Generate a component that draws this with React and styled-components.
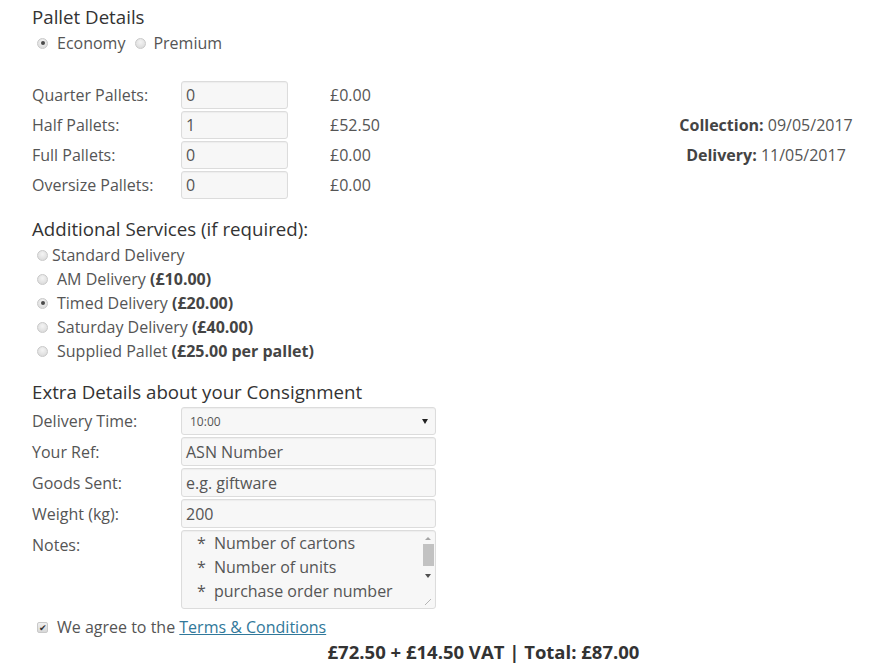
import React from "react";
import styled, { createGlobalStyle } from "styled-components";

const GlobalStyle = createGlobalStyle`
  body {
    margin: 0;
    background: #ffffff;
    font-family: "Open Sans", "Liberation Sans", sans-serif;
    color: #555555;
  }
`;

const Page = styled.div`
  width: 877px;
  padding: 5px 24px 0 32px;
  box-sizing: border-box;
`;

const Heading = styled.h3`
  margin: ${(p) => p.$top || 0}px 0 0 0;
  font-size: 18.7px;
  line-height: 24px;
  font-weight: 400;
  color: #333333;
`;

const RadioRow = styled.div`
  display: flex;
  align-items: center;
  height: 20px;
  margin-top: 4px;
  padding-left: 5px;
  gap: 10px;
`;

const Option = styled.label`
  display: flex;
  align-items: center;
  gap: ${(p) => p.$gap || 9}px;
  height: ${(p) => p.$h || 20}px;
  padding-left: ${(p) => (p.$flush ? 0 : 5)}px;
  font-size: 16px;
  color: #555555;

  b {
    color: #444444;
    font-weight: 700;
  }
`;

const RadioDot = styled.span`
  width: 11px;
  height: 11px;
  border-radius: 50%;
  box-sizing: border-box;
  border: 1px solid #c9c9c9;
  background: radial-gradient(circle at 50% 35%, #f4f4f4, #d6d6d6);
  display: flex;
  align-items: center;
  justify-content: center;

  &::after {
    content: "";
    width: 4px;
    height: 4px;
    border-radius: 50%;
    background: ${(p) => (p.$on ? "#4a4a4a" : "transparent")};
  }
`;

const PalletGrid = styled.div`
  display: grid;
  grid-template-columns: 149px 107px 42px 1fr 174px;
  grid-auto-rows: 28px;
  row-gap: 2px;
  margin-top: 28px;
  align-items: center;
`;

const Label = styled.span`
  font-size: 16px;
  color: #555555;
  align-self: ${(p) => (p.$top ? "start" : "center")};
  padding-top: ${(p) => (p.$top ? 4 : 0)}px;
`;

const Field = styled.div`
  height: ${(p) => p.$h || 28}px;
  box-sizing: border-box;
  border: 1px solid #dcdcdc;
  border-radius: 3px;
  background: #f7f7f7;
  box-shadow: inset 0 1px 1px rgba(0, 0, 0, 0.04);
  padding: 0 4px;
  display: flex;
  align-items: center;
  font-size: ${(p) => p.$fs || 16}px;
  color: #555555;
`;

const Price = styled.span`
  grid-column: 4;
  font-size: 16px;
  color: #555555;
`;

const Info = styled.span`
  grid-column: 5;
  text-align: center;
  white-space: nowrap;
  font-size: 16px;
  color: #555555;

  b {
    color: #444444;
  }
`;

const ServiceList = styled.div`
  display: flex;
  flex-direction: column;
  margin-top: 2px;
`;

const DetailGrid = styled.div`
  display: grid;
  grid-template-columns: 149px 255px;
  row-gap: 2px;
  margin-top: 3px;
  align-items: center;
`;

const Caret = styled.span`
  margin-left: auto;
  margin-right: 3px;
  width: 0;
  height: 0;
  border-left: 3px solid transparent;
  border-right: 3px solid transparent;
  border-top: 5px solid #222222;
`;

const NotesBox = styled(Field)`
  align-items: stretch;
  padding: 0 0 0 15px;
`;

const NotesText = styled.div`
  flex: 1;
  font-size: 16px;
  line-height: 24px;
  color: #555555;
`;

const NoteLine = styled.div`
  display: flex;
  gap: 10px;

  span:first-child {
    width: 7px;
  }
`;

const ScrollTrack = styled.div`
  width: 14px;
  display: flex;
  flex-direction: column;
  align-items: center;
  padding-top: 4px;
`;

const Arrow = styled.span`
  width: 0;
  height: 0;
  border-left: 3px solid transparent;
  border-right: 3px solid transparent;
  ${(p) =>
    p.$up
      ? "border-bottom: 3px solid #a5a5a5;"
      : "border-top: 4px solid #505050;"}
  margin: ${(p) => (p.$up ? "2px 0 4px" : "8px 0 0")};
`;

const Thumb = styled.span`
  width: 11px;
  height: 22px;
  background: #c2c2c2;
`;

const Grip = styled.span`
  margin-top: auto;
  margin-bottom: 3px;
  width: 6px;
  height: 6px;
  background: linear-gradient(135deg, transparent 45%, #b5b5b5 45%, #b5b5b5 55%, transparent 55%);
`;

const CheckBox = styled.span`
  width: 11px;
  height: 11px;
  box-sizing: border-box;
  border: 1px solid #c9c9c9;
  border-radius: 2px;
  background: linear-gradient(#f0f0f0, #d8d8d8);
  display: flex;
  align-items: center;
  justify-content: center;
  font-size: 9px;
  line-height: 1;
  color: #333333;
`;

const AgreeRow = styled(Option)`
  margin-top: 8px;
`;

const Terms = styled.a`
  color: #31789a;
  text-decoration: underline;
`;

const Total = styled.div`
  margin-top: 2px;
  text-align: center;
  padding-left: 262px;
  padding-right: 180px;
  font-size: 18.5px;
  font-weight: 700;
  white-space: nowrap;
  color: #333333;
`;

const pallets = [
  ["Quarter Pallets:", "0", "£0.00"],
  ["Half Pallets:", "1", "£52.50"],
  ["Full Pallets:", "0", "£0.00"],
  ["Oversize Pallets:", "0", "£0.00"],
];

const info = {
  1: ["Collection:", "09/05/2017"],
  2: ["Delivery:", "11/05/2017"],
};

const services = [
  ["Standard Delivery", null, false, 4],
  ["AM Delivery", "(£10.00)", false],
  ["Timed Delivery", "(£20.00)", true],
  ["Saturday Delivery", "(£40.00)", false],
  ["Supplied Pallet", "(£25.00 per pallet)", false],
];

export default function App() {
  return (
    <Page>
      <GlobalStyle />
      <Heading>Pallet Details</Heading>
      <RadioRow>
        <Option $flush>
          <RadioDot $on />
          Economy
        </Option>
        <Option $flush $gap={7}>
          <RadioDot />
          Premium
        </Option>
      </RadioRow>

      <PalletGrid>
        {pallets.map(([label, value, price], i) => (
          <React.Fragment key={label}>
            <Label style={{ gridRow: i + 1 }}>{label}</Label>
            <Field style={{ gridRow: i + 1, gridColumn: 2 }}>{value}</Field>
            <Price style={{ gridRow: i + 1 }}>{price}</Price>
            {info[i] && (
              <Info style={{ gridRow: i + 1 }}>
                <b>{info[i][0]}</b> {info[i][1]}
              </Info>
            )}
          </React.Fragment>
        ))}
      </PalletGrid>

      <Heading $top={18}>Additional Services (if required):</Heading>
      <ServiceList>
        {services.map(([name, cost, on, gap]) => (
          <Option key={name} $h={24} $gap={gap}>
            <RadioDot $on={on} />
            <span>
              {name} {cost && <b>{cost}</b>}
            </span>
          </Option>
        ))}
      </ServiceList>

      <Heading $top={17}>Extra Details about your Consignment</Heading>
      <DetailGrid>
        <Label>Delivery Time:</Label>
        <Field $fs={12} style={{ paddingLeft: 8 }}>
          10:00
          <Caret />
        </Field>
        <Label>Your Ref:</Label>
        <Field $h={29}>ASN Number</Field>
        <Label>Goods Sent:</Label>
        <Field $h={29}>e.g. giftware</Field>
        <Label>Weight (kg):</Label>
        <Field $h={29}>200</Field>
        <Label $top>Notes:</Label>
        <NotesBox $h={79}>
          <NotesText>
            <NoteLine>
              <span>*</span>
              <span>Number of cartons</span>
            </NoteLine>
            <NoteLine>
              <span>*</span>
              <span>Number of units</span>
            </NoteLine>
            <NoteLine>
              <span>*</span>
              <span>purchase order number</span>
            </NoteLine>
          </NotesText>
          <ScrollTrack>
            <Arrow $up />
            <Thumb />
            <Arrow />
            <Grip />
          </ScrollTrack>
        </NotesBox>
      </DetailGrid>

      <AgreeRow>
        <CheckBox>✔</CheckBox>
        <span>
          We agree to the <Terms href="#">Terms &amp; Conditions</Terms>
        </span>
      </AgreeRow>
      <Total>£72.50 + £14.50 VAT | Total: £87.00</Total>
    </Page>
  );
}
